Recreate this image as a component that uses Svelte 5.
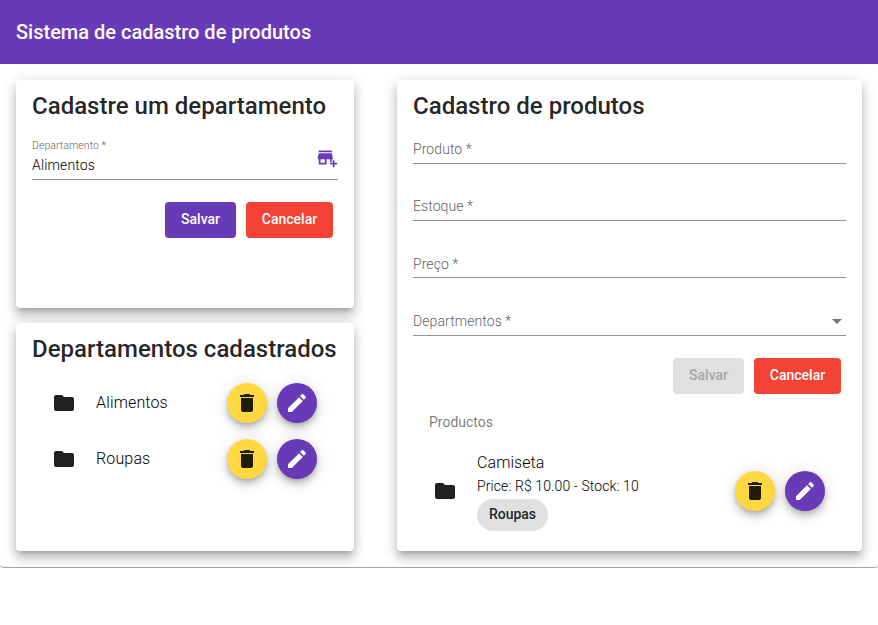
<script>
  const folder = 'M10 4H4c-1.1 0-1.99.9-1.99 2L2 18c0 1.1.9 2 2 2h16c1.1 0 2-.9 2-2V8c0-1.1-.9-2-2-2h-8l-2-2z';
  const trash = 'M6 19c0 1.1.9 2 2 2h8c1.1 0 2-.9 2-2V7H6v12zM19 4h-3.5l-1-1h-5l-1 1H5v2h14V4z';
  const pencil = 'M3 17.25V21h3.75L17.81 9.94l-3.75-3.75L3 17.25zM20.71 7.04c.39-.39.39-1.02 0-1.41l-2.34-2.34c-.39-.39-1.02-.39-1.41 0l-1.83 1.83 3.75 3.75 1.83-1.83z';
  const store = 'M15 17h2v-3h1v-2l-1-5H2l-1 5v2h1v6h9v-6h4v3zm-6 1H4v-4h5v4zM2 4h15v2H2zM20 18v-3h-2v3h-3v2h3v3h2v-3h3v-2z';
  const departments = ['Alimentos', 'Roupas'];
  const fields = ['Produto *', 'Estoque *', 'Preço *', 'Departmentos *'];
</script>

{#snippet icon(d)}
  <svg class="icon" viewBox="0 0 24 24" aria-hidden="true"><path {d} /></svg>
{/snippet}

{#snippet actions()}
  <div class="fabs">
    <button class="fab accent" aria-label="Excluir">{@render icon(trash)}</button>
    <button class="fab primary" aria-label="Editar">{@render icon(pencil)}</button>
  </div>
{/snippet}

<header>Sistema de cadastro de produtos</header>
<main>
  <div class="left">
    <section class="card">
      <h2>Cadastre um departamento</h2>
      <div class="dept-field">
        <div>
          <div class="float-label">Departamento *</div>
          <div class="value">Alimentos</div>
        </div>
        {@render icon(store)}
      </div>
      <div class="buttons">
        <button class="btn primary">Salvar</button>
        <button class="btn warn">Cancelar</button>
      </div>
    </section>
    <section class="card">
      <h2>Departamentos cadastrados</h2>
      <ul>
        {#each departments as name}
          <li>
            {@render icon(folder)}
            <span class="name">{name}</span>
            {@render actions()}
          </li>
        {/each}
      </ul>
    </section>
  </div>
  <section class="card right">
    <h2>Cadastro de produtos</h2>
    <div class="fields">
      {#each fields as label, i}
        <div class="field">
          <span>{label}</span>
          {#if i === 3}<i class="arrow"></i>{/if}
        </div>
      {/each}
    </div>
    <div class="buttons">
      <button class="btn" disabled>Salvar</button>
      <button class="btn warn">Cancelar</button>
    </div>
    <h3>Productos</h3>
    <div class="product">
      {@render icon(folder)}
      <div class="info">
        <div class="name">Camiseta</div>
        <div class="detail">Price: R$ 10.00 - Stock: 10</div>
        <span class="chip">Roupas</span>
      </div>
      {@render actions()}
    </div>
  </section>
</main>

<style>
  :global(body) { margin: 0; background: #fff; font-family: Roboto, sans-serif; color: rgba(0, 0, 0, .87); }
  * { box-sizing: border-box; }
  header { height: 64px; padding: 0 16px; background: #673ab7; color: #fff; font: 500 20px/64px Roboto, sans-serif; }
  main {
    display: flex; justify-content: space-between; height: 504px; padding: 16px; border-radius: 4px; overflow: hidden;
    border-bottom: 1px solid #a3a3a3;
    box-shadow: 0 1px 2px 0 rgba(0,0,0,.1);
  }
  .left { width: 338px; display: flex; flex-direction: column; gap: 15px; }
  .card {
    height: 228px; padding: 10px 16px 16px; border-radius: 4px; background: #fff;
    box-shadow: 0 5px 5px -3px rgba(0,0,0,.2), 0 8px 10px 1px rgba(0,0,0,.14), 0 3px 14px 2px rgba(0,0,0,.12);
  }
  .right { width: 465px; height: 471px; }
  h2 { margin: 0; font-weight: 500; font-size: 24px; line-height: 32px; white-space: nowrap; letter-spacing: .01px; }
  .icon { display: block; width: 24px; height: 24px; fill: currentColor; flex: none; }
  .dept-field { display: flex; justify-content: space-between; height: 58px; border-bottom: 1px solid #949494; }
  .dept-field .icon { width: 21px; height: 21px; margin: 25px 0 0 0; color: #673ab7; }
  .float-label { margin-top: 16px; font-weight: 300; font-size: 10.5px; line-height: 15px; letter-spacing: .06px; color: rgba(0,0,0,.68); }
  .value { font-size: 14px; line-height: 16px; font-weight: 300; margin-top: 4px; letter-spacing: .15px; color: #000; }
  .buttons { display: flex; justify-content: flex-end; gap: 10px; padding-right: 5px; margin-top: 22px; }
  .btn { height: 36px; padding: 0 16px 2px; border: 0; border-radius: 4px; font: 500 14px/34px Roboto, sans-serif; color: #fff; }
  .primary { background: #673ab7; color: #fff; }
  .warn { background: #f44336; width: 87px; padding-inline: 0; }
  .btn:disabled { background: #e0e0e0; color: #a6a6a6; }
  ul { list-style: none; margin: 10px 0 0; padding: 0 21px 0 20px; }
  li { height: 56px; display: flex; align-items: center; }
  .name { font-size: 16px; line-height: 24px; font-weight: 300; letter-spacing: .15px; color: #000; }
  .info .name { letter-spacing: .08px; }
  li .name { flex: 1; margin-left: 20px; }
  .fabs { display: flex; gap: 10px; }
  .fab {
    width: 40px; height: 40px; border: 0; padding: 8px 7.6px 8px 8.4px; border-radius: 50%;
    box-shadow: 0 3px 5px -1px rgba(0,0,0,.2), 0 6px 10px 0 rgba(0,0,0,.14), 0 1px 18px 0 rgba(0,0,0,.12);
  }
  .accent { background: #ffd740; color: rgba(0,0,0,.87); }
  .fields { padding-top: 16px; }
  .field {
    display: flex; justify-content: space-between; align-items: center; height: 26px; margin-bottom: 31px;
    padding: 0 4px 3px 0; border-bottom: 1px solid #949494; font-size: 14px; font-weight: 300; letter-spacing: .08px; color: rgba(0,0,0,.68);
  }
  .field:nth-child(3) { padding-bottom: 1px; margin-bottom: 32px; }
  .field:last-child { margin-bottom: 0; }
  .arrow { border: 5px solid transparent; border-top-color: #757575; border-bottom: 0; margin-top: 1px; }
  h3 { margin: 20px 0 0 16px; font: 400 14px/16px Roboto, sans-serif; color: rgba(0,0,0,.54); }
  .product { height: 88px; margin-top: 17px; padding: 0 21px 0 20px; display: flex; align-items: center; }
  .info { flex: 1; margin-left: 20px; padding-bottom: 1px; }
  .detail { font-size: 14px; line-height: 22px; margin-bottom: 2px; font-weight: 300; letter-spacing: .1px; color: #000; }
  .chip { display: block; width: 71px; height: 32px; border-radius: 16px; background: #e0e0e0; text-align: center; font-size: 14px; line-height: 30px; font-weight: 500; }
</style>
